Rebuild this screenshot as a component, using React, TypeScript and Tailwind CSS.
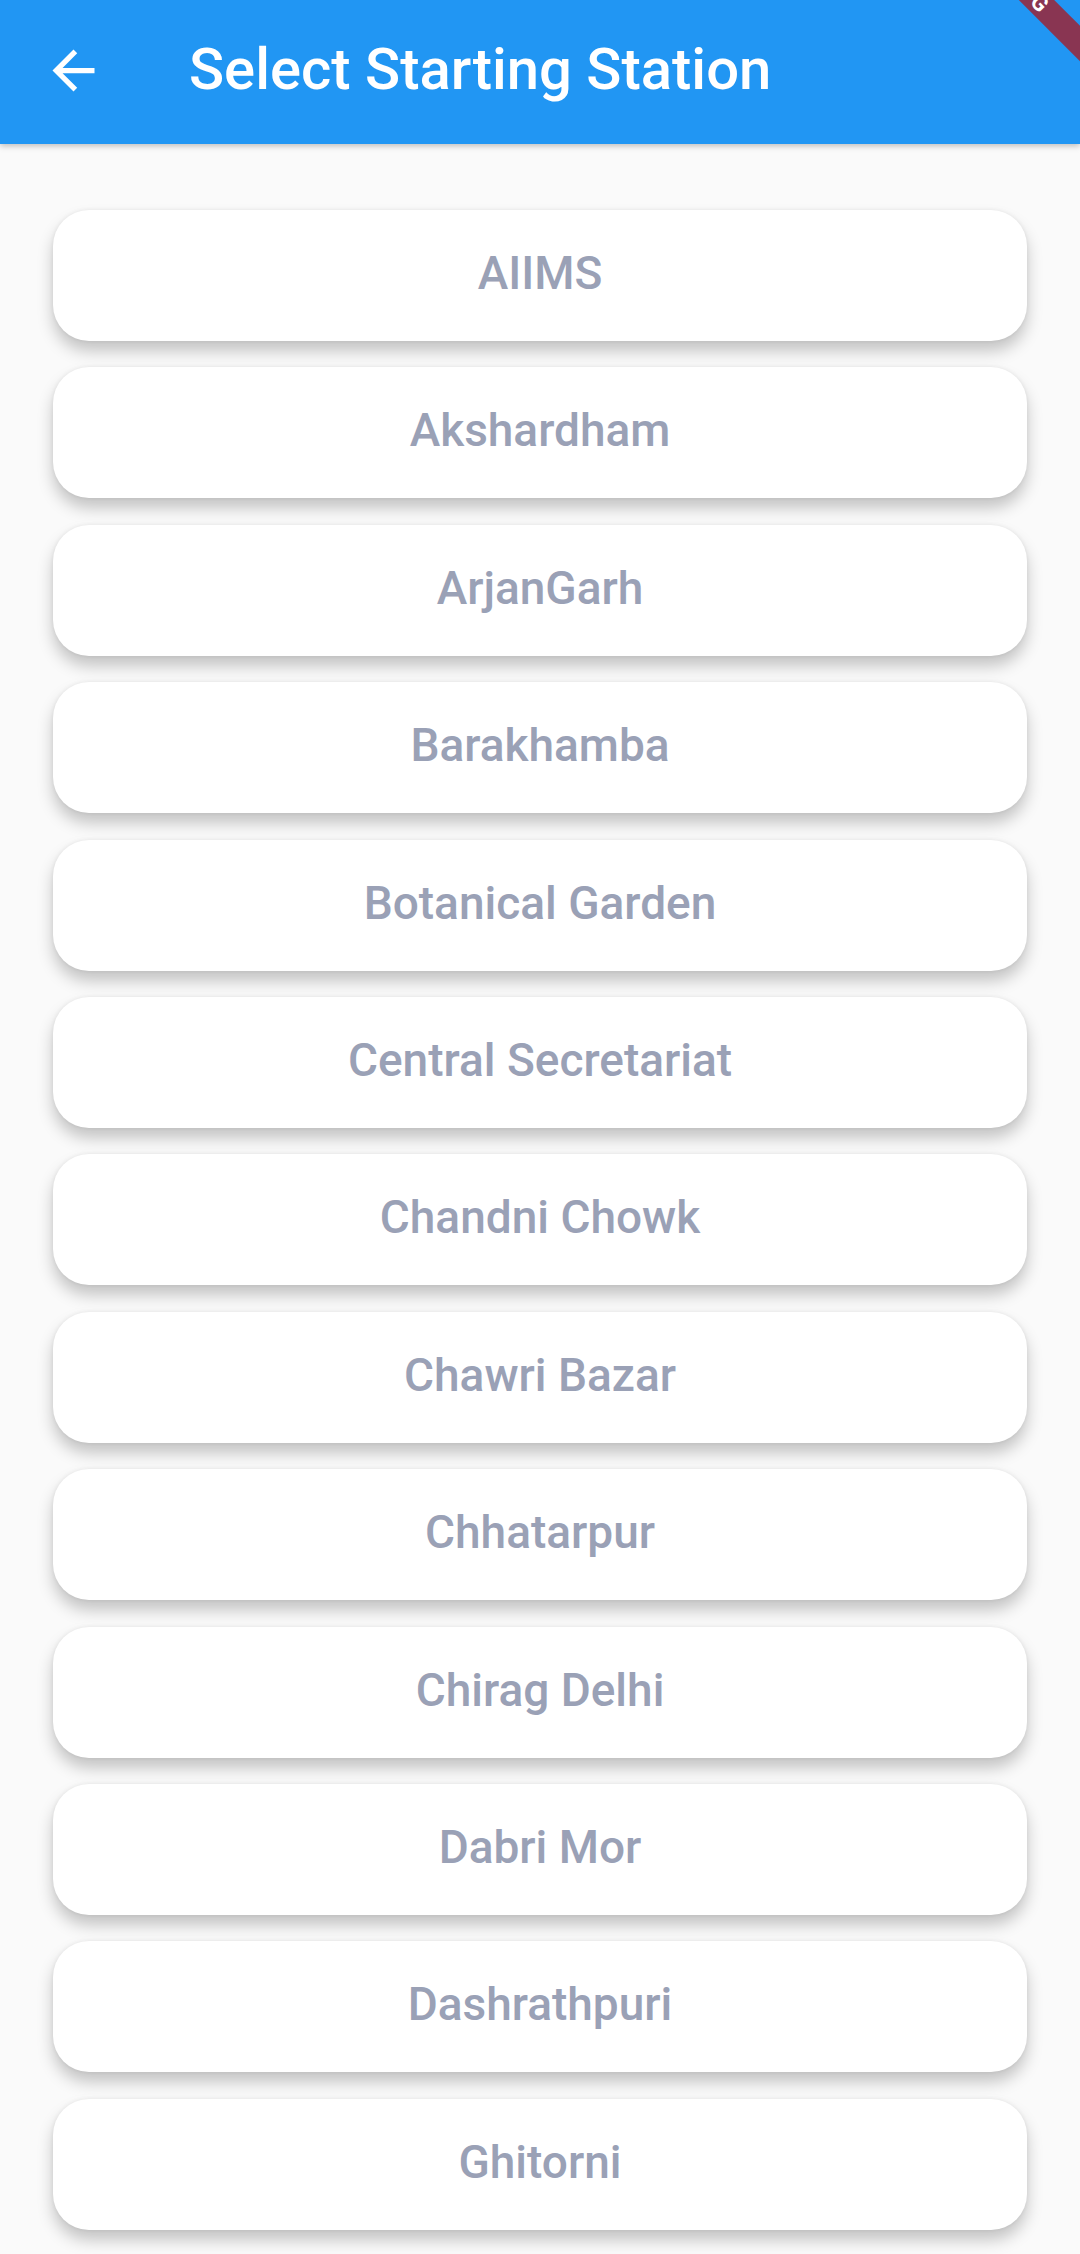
const stations = [
  'AIIMS',
  'Akshardham',
  'ArjanGarh',
  'Barakhamba',
  'Botanical Garden',
  'Central Secretariat',
  'Chandni Chowk',
  'Chawri Bazar',
  'Chhatarpur',
  'Chirag Delhi',
  'Dabri Mor',
  'Dashrathpuri',
  'Ghitorni',
];

function BackArrow() {
  return (
    <svg viewBox="0 0 24 24" className="w-[63px] h-[63px] shrink-0 ml-[42px] mb-[4px]" fill="white">
      <path d="M20 11H7.83l5.59-5.59L12 4l-8 8 8 8 1.41-1.41L7.83 13H20v-2z" />
    </svg>
  );
}

export default function App() {
  return (
    <div className="relative w-[1080px] h-[2254px] overflow-hidden bg-[#fafafa] font-['Roboto',sans-serif]">
      <header className="relative z-10 flex items-center h-[144px] bg-[#2196f3] shadow-[0_2px_6px_rgba(0,0,0,0.25)]">
        <BackArrow />
        <h1 className="ml-[84px] mb-[6px] text-[58px] font-medium text-white leading-none">
          Select Starting Station
        </h1>
      </header>

      <div className="flex flex-col gap-[26.4px] px-[53px] pt-[66px]">
        {stations.map((name) => (
          <button
            key={name}
            className="flex items-center justify-center h-[131px] pb-[5px] bg-white rounded-[36px] shadow-[0_10px_16px_rgba(0,0,0,0.22),0_0_4px_rgba(0,0,0,0.07)]"
          >
            <span className="text-[46px] font-medium text-[#9aa1b6] leading-none">{name}</span>
          </button>
        ))}
      </div>

      {/* debug banner */}
      <div className="absolute left-[920px] top-[-29.5px] z-20 w-[200px] h-[25px] rotate-45 flex items-center justify-center bg-[#893552]">
        <span className="text-[22px] font-bold text-white leading-none">DEBUG</span>
      </div>
    </div>
  );
}
